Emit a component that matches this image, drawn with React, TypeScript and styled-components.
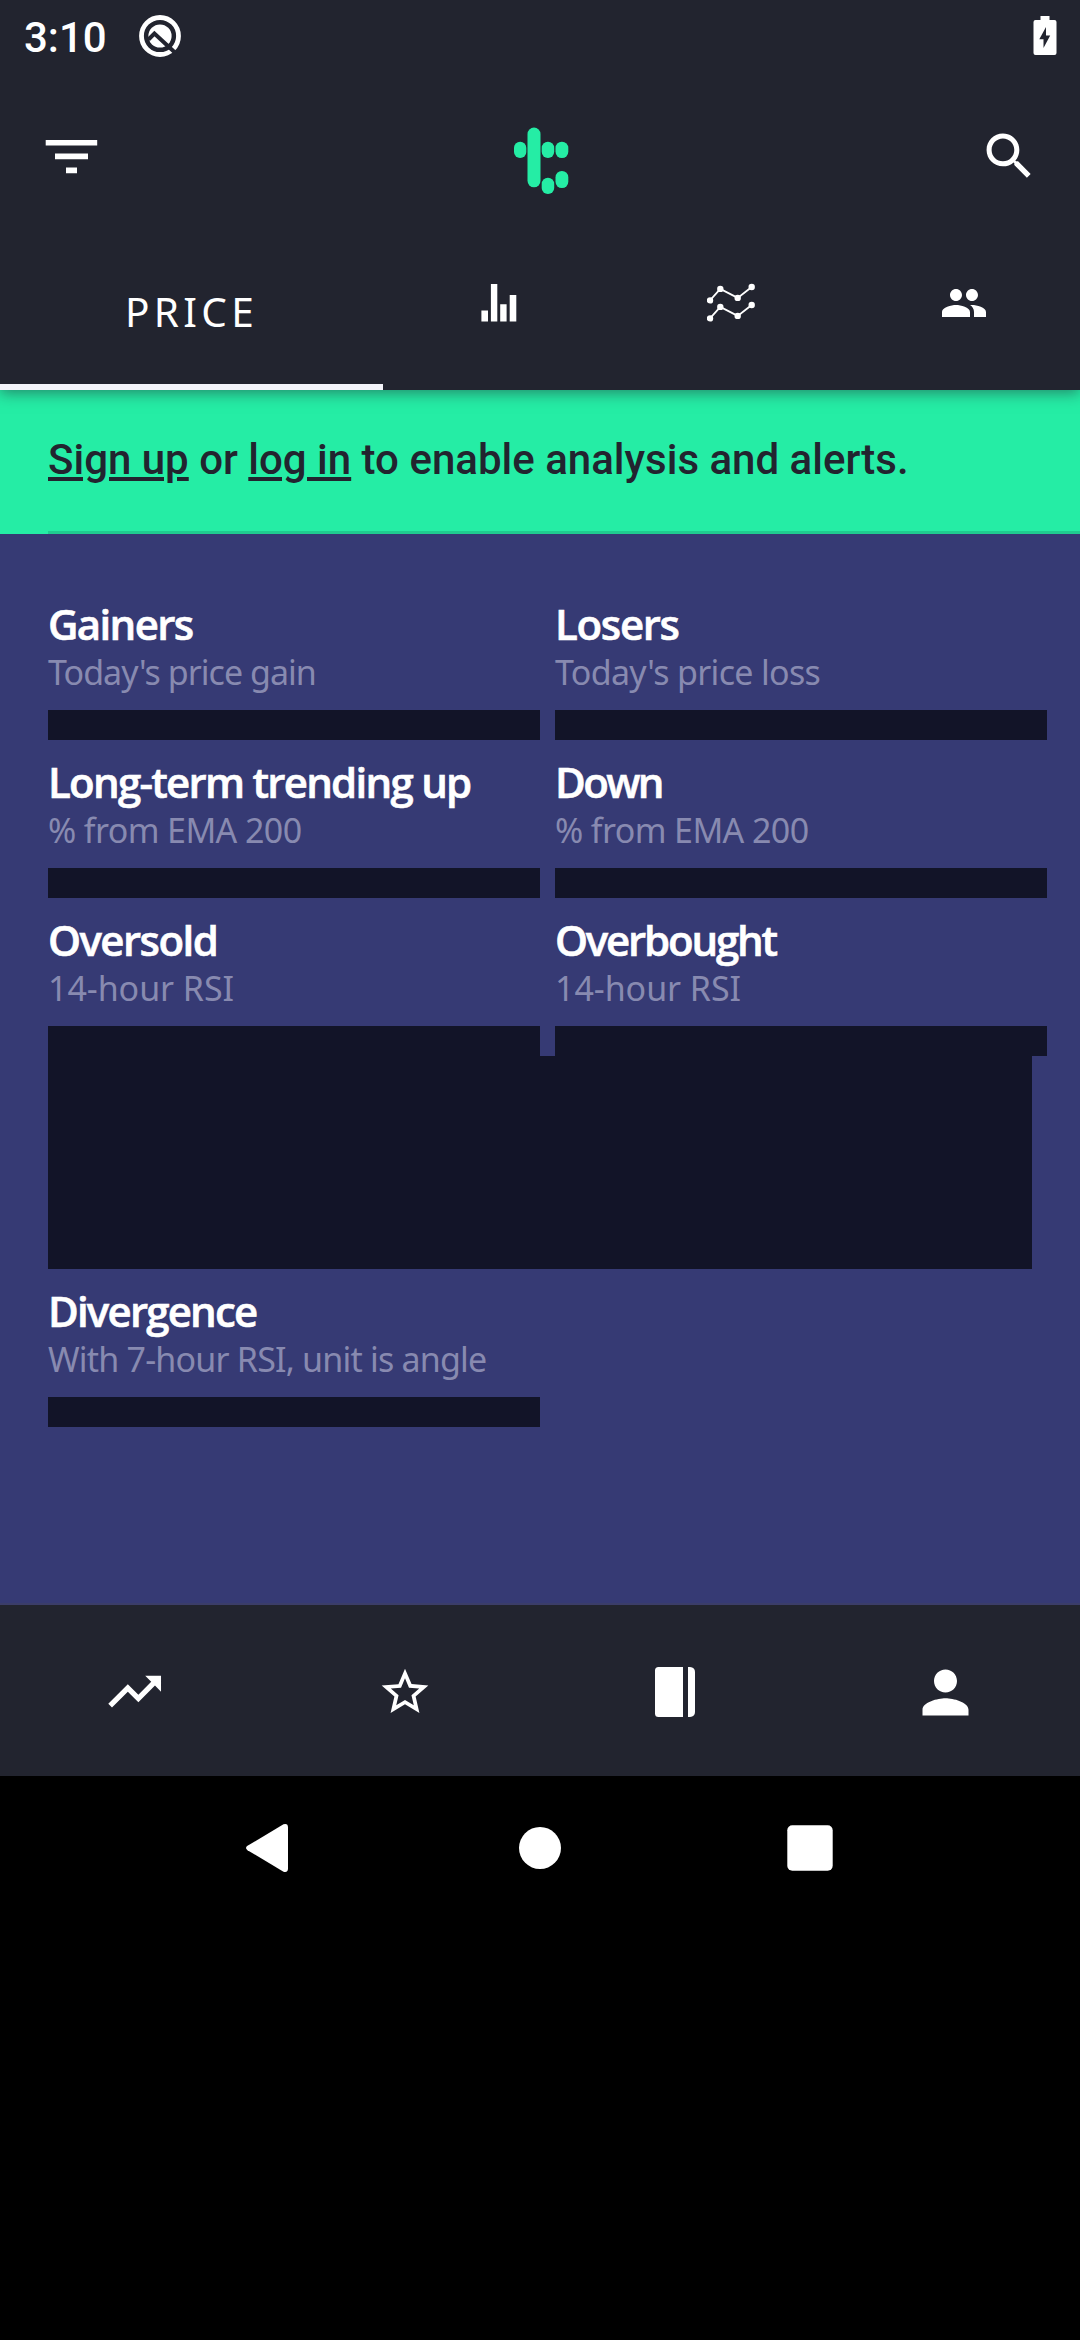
import React from 'react';
import styled, { createGlobalStyle } from 'styled-components';

const GlobalStyle = createGlobalStyle`
  *, *::before, *::after { box-sizing: border-box; }
  html, body { margin: 0; padding: 0; background: #000; }
  svg { display: block; }
`;

const colors = {
  chrome: '#22242f',
  page: '#363a74',
  mint: '#25eda5',
  ink: '#121428',
  muted: '#888ab0',
  white: '#ffffff',
};

const Screen = styled.div`
  display: flex;
  flex-direction: column;
  width: 1080px;
  height: 2340px;
  overflow: hidden;
  background: #000;
  color: ${colors.white};
  font-family: 'Noto Sans', 'Liberation Sans', sans-serif;
`;

const Header = styled.header`
  position: relative;
  z-index: 1;
  flex: none;
  background: ${colors.chrome};
  box-shadow: 0 3px 14px rgba(34, 36, 47, 0.5);
`;

const StatusBar = styled.div`
  display: flex;
  align-items: center;
  height: 72px;
  padding: 0 23px 0 24px;
`;

const Clock = styled.span`
  margin-right: 31px;
  padding-top: 3px;
  font: 500 42px/50px Roboto, 'Liberation Sans', sans-serif;
`;

const StatusEnd = styled.div`
  margin-left: auto;
`;

const AppBar = styled.div`
  display: flex;
  align-items: center;
  justify-content: space-between;
  height: 144px;
  padding: 24px 40px 0 41px;
`;

const BrandSlot = styled.div`
  padding-top: 9px;
`;

const IconButton = styled.button`
  display: flex;
  align-items: center;
  justify-content: center;
  width: 61px;
  height: 61px;
  padding: 0;
  border: 0;
  background: none;
  color: inherit;
`;

const Tabs = styled.nav`
  display: grid;
  grid-template-columns: 383px repeat(3, 1fr);
  height: 174px;
`;

const Tab = styled.div`
  display: flex;
  align-items: center;
  justify-content: center;
`;

const ActiveTab = styled(Tab)`
  padding-top: 23px;
  border-bottom: 6px solid #f4f4fa;
  font-size: 40.5px;
  line-height: 50px;
  letter-spacing: 4.3px;
`;

const Banner = styled.section`
  flex: none;
  display: flex;
  flex-direction: column;
  justify-content: space-between;
  height: 144px;
  padding: 45px 0 0 48px;
  background: ${colors.mint};
  color: ${colors.chrome};
  font: 500 42px/50px Roboto, 'Liberation Sans', sans-serif;
`;

const BannerText = styled.p`
  margin: 0;
`;

const BannerLink = styled.span`
  text-decoration: underline;
  text-decoration-thickness: 4px;
  text-underline-offset: 3px;
`;

const BannerRule = styled.div`
  height: 3px;
  background: #20cb90;
`;

const Content = styled.main`
  flex: none;
  display: flex;
  flex-direction: column;
  height: 1071px;
  padding: 48px 33px 0 48px;
  background: ${colors.page};
  border-bottom: 2px solid #3b3d69;
`;

const CardGrid = styled.div`
  display: grid;
  grid-template-columns: 492px 492px;
  column-gap: 15px;
`;

const Card = styled.article`
  display: flex;
  flex-direction: column;
  padding-top: 17px;
`;

const CardTitle = styled.h2<{ $tracking: number }>`
  margin: 0;
  font: 600 42px/50px 'Open Sans', 'Noto Sans', sans-serif;
  letter-spacing: ${(p) => p.$tracking}px;
  -webkit-text-stroke: 0.6px currentColor;
  white-space: nowrap;
`;

const CardSubtitle = styled.p<{ $tracking: number }>`
  margin: 0 0 15px;
  color: ${colors.muted};
  font-size: 34px;
  line-height: 46px;
  letter-spacing: ${(p) => p.$tracking}px;
  white-space: nowrap;
`;

const CardBody = styled.div`
  height: 30px;
  background: ${colors.ink};
`;

const WidePanel = styled.div`
  flex: none;
  width: 984px;
  height: 213px;
  background: ${colors.ink};
`;

const BottomNav = styled.nav`
  flex: none;
  display: grid;
  grid-template-columns: repeat(4, 1fr);
  height: 171px;
  padding-top: 3px;
  background: ${colors.chrome};
`;

const NavItem = styled.div`
  display: flex;
  align-items: center;
  justify-content: center;
`;

const SystemNav = styled.nav`
  flex: none;
  display: grid;
  grid-template-columns: repeat(3, 270px);
  justify-content: center;
  height: 144px;
`;

type CardInfo = {
  title: string;
  titleTracking: number;
  subtitle: string;
  subtitleTracking: number;
};

const pairedCards: CardInfo[] = [
  { title: 'Gainers', titleTracking: -1.65, subtitle: "Today's price gain", subtitleTracking: -0.97 },
  { title: 'Losers', titleTracking: -1.33, subtitle: "Today's price loss", subtitleTracking: -0.69 },
  { title: 'Long-term trending up', titleTracking: -1.74, subtitle: '% from EMA 200', subtitleTracking: -0.61 },
  { title: 'Down', titleTracking: -2.6, subtitle: '% from EMA 200', subtitleTracking: -0.61 },
  { title: 'Oversold', titleTracking: -1.56, subtitle: '14-hour RSI', subtitleTracking: -0.06 },
  { title: 'Overbought', titleTracking: -2.2, subtitle: '14-hour RSI', subtitleTracking: -0.06 },
];

const divergenceCards: CardInfo[] = [
  { title: 'Divergence', titleTracking: -1.81, subtitle: 'With 7-hour RSI, unit is angle', subtitleTracking: -0.8 },
];

const NotificationIcon = () => (
  <svg width="44" height="44" viewBox="0 0 44 44">
    <circle cx="22" cy="22" r="18.5" fill="none" stroke="#fff" strokeWidth="4.8" />
    <circle cx="22" cy="22" r="11.6" fill="#fff" />
    <path d="M10.5 25.5 16.4 19.6 38 39.5" fill="none" stroke={colors.chrome} strokeWidth="4" />
  </svg>
);

const BatteryIcon = () => (
  <svg width="24" height="40" viewBox="0 0 24 40" fill="#fff">
    <path d="M7.5 0h9v4h5q2 0 2 2v31q0 2-2 2h-19q-2 0-2-2V6q0-2 2-2h5z" />
    <path d="M13 11 6.3 23.2h4.2V32l6.7-12.6H13z" fill={colors.chrome} />
  </svg>
);

const FilterIcon = () => (
  <svg width="61" height="61" viewBox="0 0 61 61" fill="#fff">
    <path d="M4.7 14h51.5v5.6H4.700zM14 27.600h33v5.600H14zM25 41.600h11v5.600H25z" />
  </svg>
);

const SearchIcon = () => (
  <svg width="60.5" height="60.5" viewBox="0 0 24 24" fill="#fff">
    <path d="M15.5 14h-.79l-.28-.27C15.41 12.59 16 11.11 16 9.5 16 5.91 13.09 3 9.5 3S3 5.91 3 9.5 5.91 16 9.5 16c1.61 0 3.09-.59 4.23-1.57l.27.28v.79l5 4.99L20.49 19l-4.99-5zm-6 0C7.01 14 5 11.99 5 9.5S7.01 5 9.5 5 14 7.01 14 9.5 11.99 14 9.5 14z" />
  </svg>
);

const BrandLogo = () => (
  <svg width="56" height="68" viewBox="0 0 56 68" fill={colors.mint}>
    <rect x="1" y="14.7" width="12.3" height="16.3" rx="6.1" />
    <rect x="14.5" y="0.5" width="13" height="59.8" rx="6.5" />
    <rect x="28.7" y="14.7" width="12.5" height="16.3" rx="6.2" />
    <rect x="42.5" y="14.7" width="12.8" height="16.3" rx="6.3" />
    <rect x="28.7" y="50.7" width="12.5" height="16.4" rx="6.2" />
    <rect x="42.5" y="44" width="12.8" height="17" rx="6.3" />
  </svg>
);

const BarsIcon = () => (
  <svg width="48" height="48" viewBox="0 0 48 48" fill="#fff">
    <path d="M6.4 31.5h6.6v11H6.4zM15.9 5h6.4v37.5h-6.4zM25.2 25.3h6.4v17.2h-6.4zM34.7 16h6.6v26.5h-6.6z" />
  </svg>
);

const linePoints: [number, number][] = [
  [3, 22],
  [13.3, 10.5],
  [30.7, 19.5],
  [44.7, 8.6],
];

const LinesIcon = () => (
  <svg width="48" height="48" viewBox="0 0 48 48" fill="#fff">
    {[0, 18].map((dy) => (
      <g key={dy} transform={`translate(0 ${dy - 0.6})`}>
        <polyline points={linePoints.map((p) => p.join(',')).join(' ')} fill="none" stroke="#fff" strokeWidth="1.8" />
        {linePoints.map(([x, y]) => (
          <circle key={x} cx={x} cy={y} r="3.2" />
        ))}
      </g>
    ))}
  </svg>
);

const PeopleIcon = () => (
  <svg width="48" height="48" viewBox="0 0 24 24" fill="#fff">
    <path d="M16 11c1.66 0 2.99-1.34 2.99-3S17.66 5 16 5c-1.66 0-3 1.34-3 3s1.34 3 3 3zm-8 0c1.66 0 2.99-1.34 2.99-3S9.66 5 8 5C6.34 5 5 6.34 5 8s1.34 3 3 3zm0 2c-2.33 0-7 1.17-7 3.5V19h14v-2.5c0-2.33-4.67-3.5-7-3.5zm8 0c-.29 0-.62.02-.97.05 1.16.84 1.97 1.97 1.97 3.45V19h6v-2.5c0-2.33-4.67-3.5-7-3.5z" />
  </svg>
);

const TrendIcon = () => (
  <svg width="63.3" height="63.3" viewBox="0 0 24 24" fill="#fff">
    <path d="M16 6l2.29 2.29-4.88 4.88-4-4L2 16.59 3.41 18l6-6 4 4 6.3-6.29L22 12V6z" />
  </svg>
);

const StarIcon = () => (
  <svg width="56" height="56" viewBox="0 0 24 24" fill="#fff">
    <path d="M22 9.24l-7.19-.62L12 2 9.19 8.63 2 9.24l5.46 4.73L5.82 21 12 17.27 18.18 21l-1.63-7.03L22 9.24zM12 15.4l-3.76 2.27 1-4.28-3.32-2.88 4.38-.38L12 6.1l1.71 4.04 4.38.38-3.32 2.88 1 4.28L12 15.4z" />
  </svg>
);

const JournalIcon = () => (
  <svg width="40" height="52" viewBox="0 0 40 52" fill="#fff">
    <path d="M3.5 1H28v50H3.5Q0 51 0 47.5V4.5Q0 1 3.5 1zM33 1h2q5 .4 5 5v40q0 4.600-5 5h-2z" />
  </svg>
);

const PersonIcon = () => (
  <svg width="69" height="69" viewBox="0 0 24 24" fill="#fff">
    <path d="M12 12c2.21 0 4-1.79 4-4s-1.79-4-4-4-4 1.79-4 4 1.79 4 4 4zm0 2c-2.67 0-8 1.34-8 4v2h16v-2c0-2.66-5.33-4-8-4z" />
  </svg>
);

const BackIcon = () => (
  <svg width="48" height="50" viewBox="0 0 48 50" fill="#fff">
    <path d="M1.5 22.8 37.500 1.300Q42 0 42 4.500v41Q42 50 37.500 48.700L1.500 27.200Q-1.500 25 1.500 22.800z" />
  </svg>
);

const HomeIcon = () => (
  <svg width="42" height="42" viewBox="0 0 42 42" fill="#fff">
    <circle cx="21" cy="21" r="21" />
  </svg>
);

const RecentsIcon = () => (
  <svg width="46" height="46" viewBox="0 0 46 46" fill="#fff">
    <rect x="0.3" y="0.3" width="45.4" height="45.4" rx="5" />
  </svg>
);

const CardList = ({ cards }: { cards: CardInfo[] }) => (
  <CardGrid>
    {cards.map((card) => (
      <Card key={card.title}>
        <CardTitle $tracking={card.titleTracking}>{card.title}</CardTitle>
        <CardSubtitle $tracking={card.subtitleTracking}>{card.subtitle}</CardSubtitle>
        <CardBody />
      </Card>
    ))}
  </CardGrid>
);

export default function App() {
  return (
    <Screen>
      <GlobalStyle />
      <Header>
        <StatusBar>
          <Clock>3:10</Clock>
          <NotificationIcon />
          <StatusEnd>
            <BatteryIcon />
          </StatusEnd>
        </StatusBar>
        <AppBar>
          <IconButton aria-label="Filter">
            <FilterIcon />
          </IconButton>
          <BrandSlot>
            <BrandLogo />
          </BrandSlot>
          <IconButton aria-label="Search">
            <SearchIcon />
          </IconButton>
        </AppBar>
        <Tabs>
          <ActiveTab>PRICE</ActiveTab>
          <Tab>
            <BarsIcon />
          </Tab>
          <Tab>
            <LinesIcon />
          </Tab>
          <Tab>
            <PeopleIcon />
          </Tab>
        </Tabs>
      </Header>
      <Banner>
        <BannerText>
          <BannerLink>Sign up</BannerLink> or <BannerLink>log in</BannerLink> to enable analysis and alerts.
        </BannerText>
        <BannerRule />
      </Banner>
      <Content>
        <CardList cards={pairedCards} />
        <WidePanel />
        <CardList cards={divergenceCards} />
      </Content>
      <BottomNav>
        <NavItem>
          <TrendIcon />
        </NavItem>
        <NavItem>
          <StarIcon />
        </NavItem>
        <NavItem>
          <JournalIcon />
        </NavItem>
        <NavItem>
          <PersonIcon />
        </NavItem>
      </BottomNav>
      <SystemNav>
        <NavItem>
          <BackIcon />
        </NavItem>
        <NavItem>
          <HomeIcon />
        </NavItem>
        <NavItem>
          <RecentsIcon />
        </NavItem>
      </SystemNav>
    </Screen>
  );
}
